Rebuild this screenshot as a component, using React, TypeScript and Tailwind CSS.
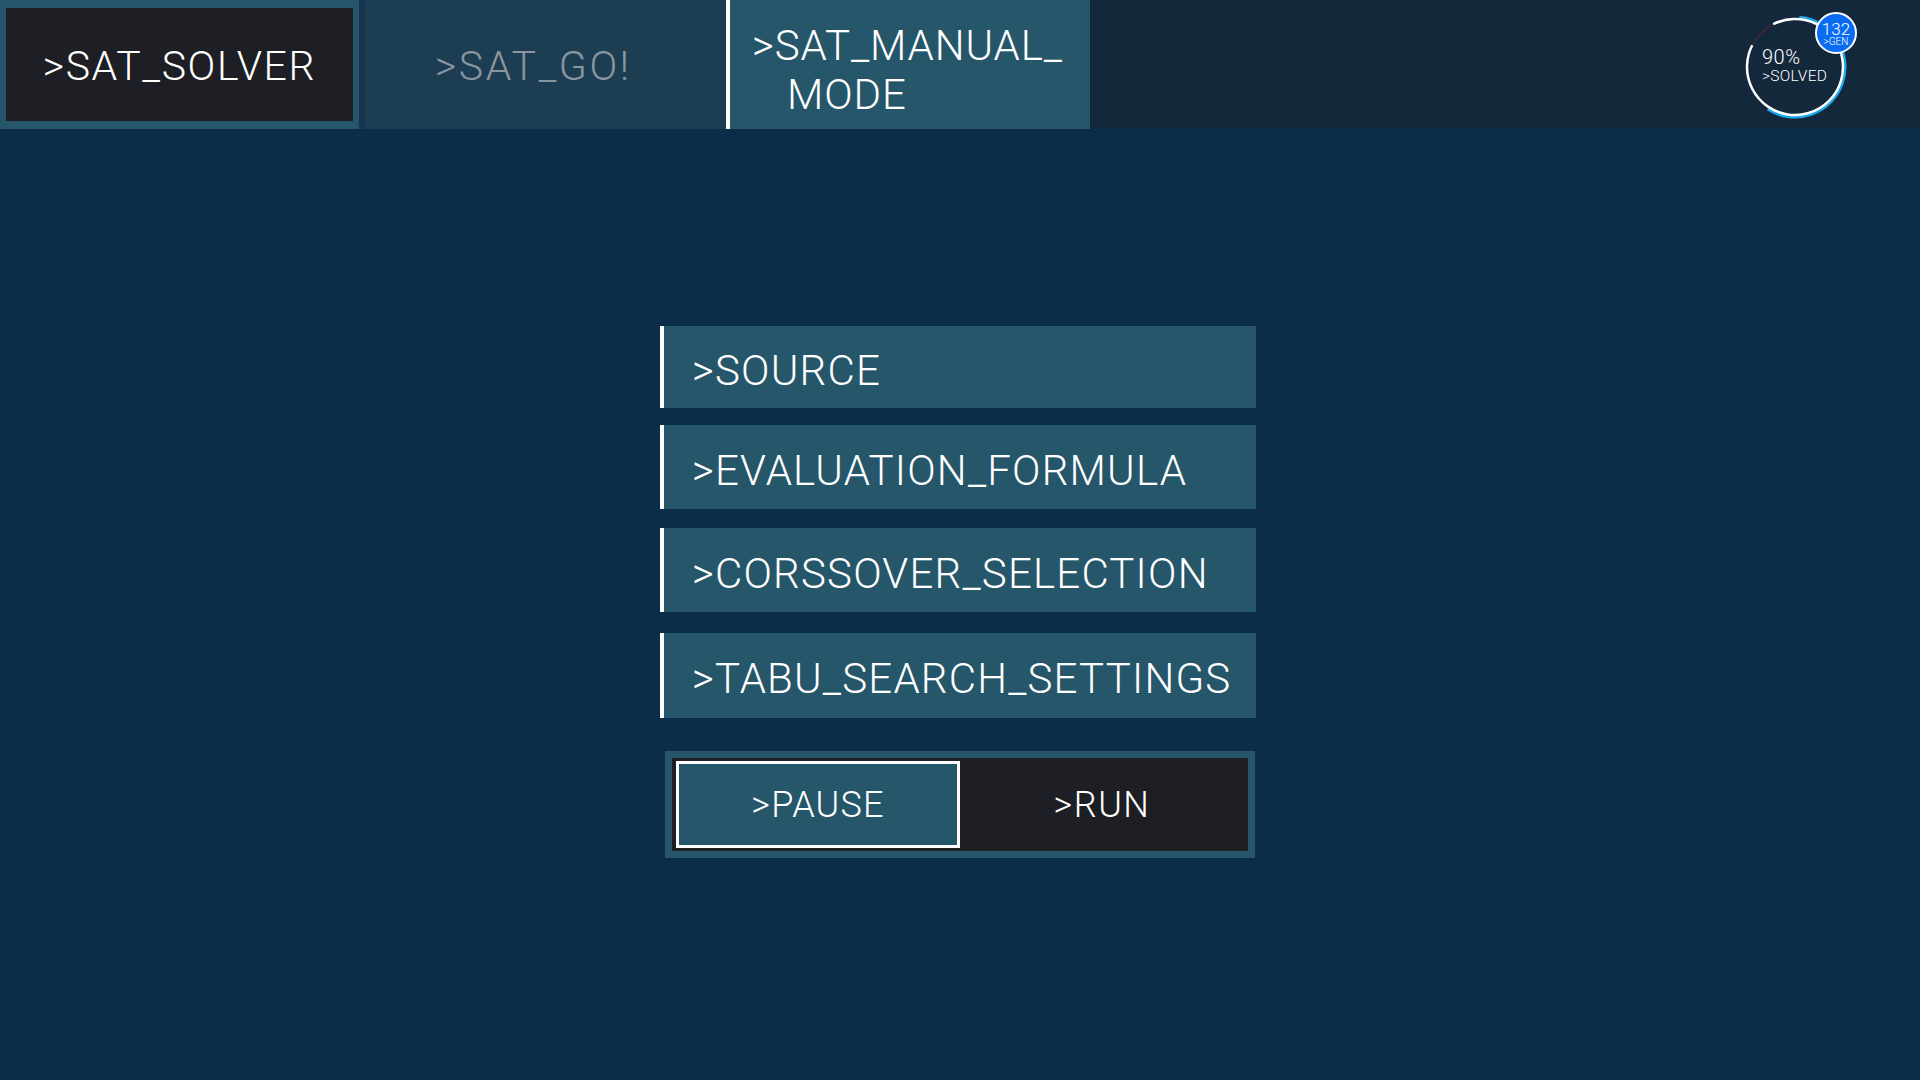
const font = { fontFamily: 'Roboto, "Liberation Sans", Arial, sans-serif' }

const menuItems = [
  { label: '>SOURCE', cls: 'h-[82px]' },
  { label: '>EVALUATION_FORMULA', cls: 'h-[84px] mt-[17px]' },
  { label: '>CORSSOVER_SELECTION', cls: 'h-[84px] mt-[19px]' },
  { label: '>TABU_SEARCH_SETTINGS', cls: 'h-[85px] mt-[21px]' },
]

function arc(cx: number, cy: number, r: number, a0: number, a1: number) {
  const p = (a: number) => {
    const rad = ((a - 90) * Math.PI) / 180
    return [cx + r * Math.cos(rad), cy + r * Math.sin(rad)]
  }
  const [x0, y0] = p(a0)
  const [x1, y1] = p(a1)
  const large = a1 - a0 > 180 ? 1 : 0
  return `M ${x0} ${y0} A ${r} ${r} 0 ${large} 1 ${x1} ${y1}`
}

function Progress() {
  return (
    <div className="relative w-[120px] h-[112px] mt-[12px] mr-[60px]">
      <svg width="112" height="112" viewBox="0 0 112 112" className="absolute left-0 top-0">
        <path d={arc(55, 55, 49.5, 5, 213)} stroke="#19a9ec" strokeWidth="4" fill="none" />
        <path d={arc(55, 55, 48, 297, 333)} stroke="#4a2433" strokeWidth="1.5" fill="none" />
        <path d={arc(55, 55, 48, -27, 297)} stroke="#ffffff" strokeWidth="2.5" fill="none" />
      </svg>
      <div className="absolute left-[22px] top-[35px] flex flex-col text-white leading-none">
        <span className="text-[20px] tracking-[0.5px]">90%</span>
        <span className="text-[15.5px] tracking-[0.3px] mt-[2px]">&gt;SOLVED</span>
      </div>
      <div className="absolute left-[75px] top-[0px] w-[42px] h-[42px] rounded-full bg-[#0a6cf2] border-2 border-white flex flex-col items-center justify-center text-white leading-none">
        <span className="text-[17px] mt-[2px]">132</span>
        <span className="text-[10px] -mt-[1px]">&gt;GEN</span>
      </div>
    </div>
  )
}

export default function App() {
  return (
    <div className="w-[1920px] h-[1080px] bg-[#0c2d4a] flex flex-col font-light" style={font}>
      {/* Header */}
      <header className="h-[129px] flex bg-[#14283c] shrink-0">
        <div className="w-[359px] bg-[#25566a] pt-[8px] pb-[8px] px-[6px] flex">
          <div className="flex-1 bg-[#1e1f24] flex items-center justify-center pt-[4px] text-white text-[41px] tracking-[1.6px]">
            &gt;SAT_SOLVER
          </div>
        </div>
        <div className="w-[6px] bg-[#143450]" />
        <div className="w-[361px] bg-[#1c3d52] flex items-center pl-[70px] pt-[4px] text-[#8a969f] text-[41px] tracking-[2.6px]">
          &gt;SAT_GO!
        </div>
        <div className="w-[364px] bg-[#25566a] border-l-[4px] border-white pl-[22px] pt-[21px] text-white text-[42px] leading-[49px] tracking-[0.9px]">
          <div>&gt;SAT_MANUAL_</div>
          <div className="pl-[35px]">MODE</div>
        </div>
        <div className="flex-1" />
        <Progress />
      </header>

      {/* Main */}
      <main className="flex-1 flex flex-col items-center pt-[197px] pr-[4px]">
        <div className="w-[596px] flex flex-col">
          {menuItems.map(({ label, cls }) => (
            <div
              key={label}
              className={`${cls} bg-[#25566a] border-l-[4px] border-white flex items-center pl-[28px] pt-[6px] text-white text-[42px] tracking-[1.2px]`}
            >
              {label}
            </div>
          ))}
        </div>
        <div className="w-[590px] mt-[33px] ml-[4px] bg-[#25566a] p-[7px]">
          <div className="h-[93px] bg-[#1e1f24] flex items-center px-[4px]">
            <div className="w-[284px] h-[87px] bg-[#25566a] border-[3px] border-white flex items-center justify-center text-white text-[36px] tracking-[1.2px]">
              &gt;PAUSE
            </div>
            <div className="flex-1 flex items-center justify-center text-white text-[36px] tracking-[1.5px]">
              &gt;RUN
            </div>
          </div>
        </div>
      </main>
    </div>
  )
}
